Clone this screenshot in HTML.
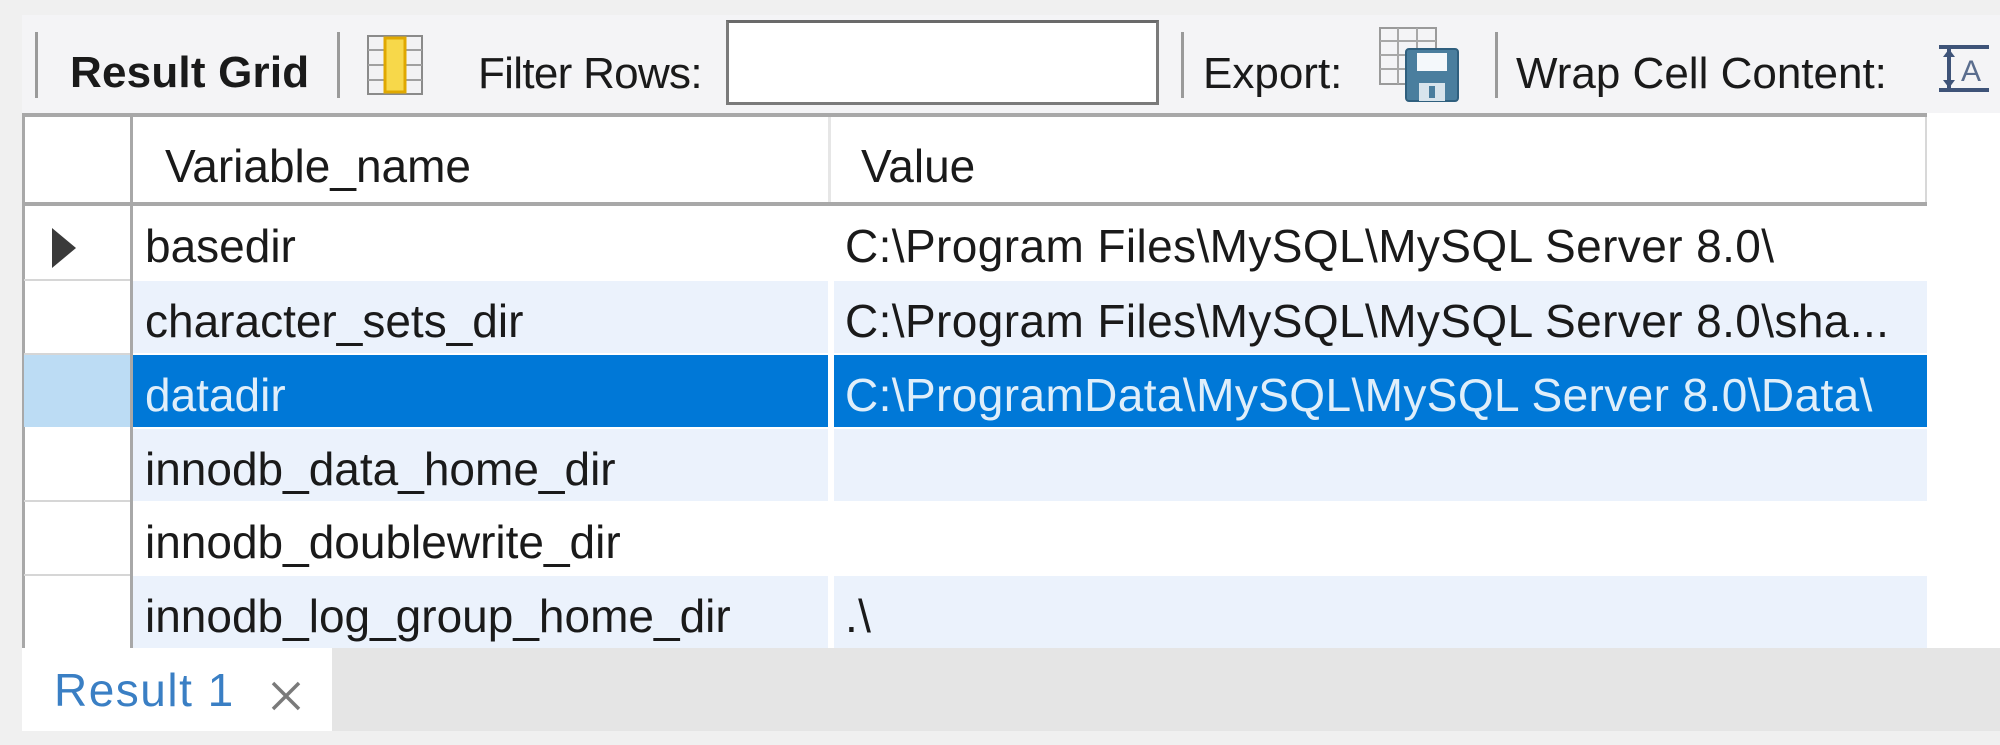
<!DOCTYPE html>
<html><head><meta charset="utf-8"><style>
*{margin:0;padding:0;box-sizing:border-box}
body{width:2000px;height:745px;background:#f0f0f0;position:relative;overflow:hidden;font-family:"Liberation Sans",Tahoma,sans-serif;color:#1a1a1a}
.a{position:absolute}
.t{position:absolute;font-size:46px;white-space:nowrap;line-height:1}
.v{letter-spacing:0.4px}
.sep{position:absolute;width:3px;background:#9a9a9a;top:32px;height:66px}
.row{position:absolute;left:133px;width:1794px;height:72px}
.c1{position:absolute;left:0;top:0;width:695px;height:72px}
.c2{position:absolute;left:701px;top:0;width:1093px;height:72px}
</style></head><body>
<div class="a" style="left:22px;top:15px;width:1978px;height:98px;background:#f4f4f6"></div>
<div class="sep" style="left:35px"></div>
<div class="t" style="left:70px;top:51px;font-weight:bold;font-size:44px;letter-spacing:0.2px">Result Grid</div>
<div class="sep" style="left:337px"></div>
<svg class="a" style="left:367px;top:35px" width="56" height="60" viewBox="0 0 56 60">
<rect x="1" y="1" width="54" height="58" fill="#f2f2f4" stroke="#8a8a8a" stroke-width="2"/>
<g stroke="#a0a0a0" stroke-width="2"><line x1="1" y1="15" x2="55" y2="15"/><line x1="1" y1="30" x2="55" y2="30"/><line x1="1" y1="45" x2="55" y2="45"/></g>
<rect x="18" y="3" width="20" height="54" fill="#f7d84a" stroke="#e0a800" stroke-width="3"/>
</svg>
<div class="t" style="left:478px;top:52px;font-size:44px;letter-spacing:-0.7px">Filter Rows:</div>
<div class="a" style="left:726px;top:20px;width:433px;height:85px;background:#fff;border:3px solid #7a7a7a;border-top-color:#6a6a6a"></div>
<div class="sep" style="left:1181px"></div>
<div class="t" style="left:1203px;top:52px;font-size:44px;letter-spacing:0px">Export:</div>
<svg class="a" style="left:1379px;top:27px" width="82" height="76" viewBox="0 0 82 76">
<rect x="1" y="1" width="56" height="56" fill="#f4f4f6" stroke="#9a9a9a" stroke-width="2"/>
<g stroke="#a8a8a8" stroke-width="2"><line x1="1" y1="14" x2="57" y2="14"/><line x1="1" y1="28" x2="57" y2="28"/><line x1="1" y1="42" x2="57" y2="42"/><line x1="19" y1="1" x2="19" y2="57"/><line x1="38" y1="1" x2="38" y2="57"/></g>
<rect x="27" y="22" width="52" height="52" rx="3" fill="#4a7e9e" stroke="#2f5f7e" stroke-width="2"/>
<rect x="38" y="26" width="30" height="18" fill="#f4f8fb"/>
<rect x="40" y="56" width="26" height="18" fill="#d8e4ec"/>
<rect x="50" y="59" width="6" height="12" fill="#4a7e9e"/>
</svg>
<div class="sep" style="left:1495px"></div>
<div class="t" style="left:1516px;top:52px;font-size:44px;letter-spacing:0px">Wrap Cell Content:</div>
<svg class="a" style="left:1939px;top:45px" width="52" height="48" viewBox="0 0 52 48">
<g fill="#3e5378"><rect x="0" y="0" width="50" height="4"/><rect x="0" y="43" width="50" height="4"/><rect x="8" y="4" width="4" height="39"/><polygon points="4,12 16,12 10,4"/><polygon points="4,35 16,35 10,43"/></g>
<text x="22" y="36" font-family="Liberation Sans,sans-serif" font-size="30" fill="#5a6d8e">A</text>
</svg>
<!-- table -->
<div class="a" style="left:22px;top:113px;width:1978px;height:535px;background:#fff"></div>
<div class="a" style="left:22px;top:113px;width:1905px;height:4px;background:#a8a8a8"></div>
<div class="a" style="left:22px;top:113px;width:3px;height:535px;background:#a8a8a8"></div>
<div class="a" style="left:130px;top:113px;width:3px;height:535px;background:#a8a8a8"></div>
<div class="a" style="left:1925px;top:117px;width:2px;height:88px;background:#d8d8d8"></div>
<div class="a" style="left:828px;top:117px;width:3px;height:87px;background:#e6e6e6"></div>
<div class="a" style="left:22px;top:202px;width:1905px;height:4px;background:#a8a8a8"></div>
<div class="t" style="left:165px;top:143px">Variable_name</div>
<div class="t" style="left:861px;top:143px">Value</div>
<div class="a" style="left:24px;top:279px;width:106px;height:2px;background:#d6d6d6"></div>
<div class="a" style="left:24px;top:353px;width:106px;height:2px;background:#d6d6d6"></div>
<div class="a" style="left:24px;top:355px;width:106px;height:72px;background:#bcdcf4"></div>
<div class="a" style="left:24px;top:500px;width:106px;height:2px;background:#d6d6d6"></div>
<div class="a" style="left:24px;top:574px;width:106px;height:2px;background:#d6d6d6"></div>
<svg class="a" style="left:52px;top:228px" width="24" height="40"><polygon points="0,0 24,20 0,40" fill="#3a3a3a"/></svg>

<div class="row" style="top:206px"><div class="c1"></div><div class="c2"></div></div>
<div class="t" style="left:145px;top:223px">basedir</div>
<div class="t v" style="left:845px;top:223px">C:\Program Files\MySQL\MySQL Server 8.0\</div>

<div class="row" style="top:281px"><div class="c1" style="background:#ebf2fc"></div><div class="c2" style="background:#ebf2fc"></div></div>
<div class="t" style="left:145px;top:298px">character_sets_dir</div>
<div class="t v" style="left:845px;top:298px">C:\Program Files\MySQL\MySQL Server 8.0\sha...</div>

<div class="row" style="top:355px"><div class="c1" style="background:#0078d7"></div><div class="c2" style="background:#0078d7"></div></div>
<div class="t" style="left:145px;top:372px;color:#dfeefa">datadir</div>
<div class="t v" style="left:845px;top:372px;color:#dfeefa">C:\ProgramData\MySQL\MySQL Server 8.0\Data\</div>

<div class="row" style="top:429px"><div class="c1" style="background:#ebf2fc"></div><div class="c2" style="background:#ebf2fc"></div></div>
<div class="t" style="left:145px;top:446px">innodb_data_home_dir</div>

<div class="row" style="top:502px"><div class="c1"></div><div class="c2"></div></div>
<div class="t" style="left:145px;top:519px">innodb_doublewrite_dir</div>

<div class="row" style="top:576px"><div class="c1" style="background:#ebf2fc"></div><div class="c2" style="background:#ebf2fc"></div></div>
<div class="t" style="left:145px;top:593px">innodb_log_group_home_dir</div>
<div class="t v" style="left:845px;top:593px">.\</div>

<div class="a" style="left:22px;top:648px;width:1978px;height:83px;background:#e5e5e5"></div>
<div class="a" style="left:22px;top:648px;width:310px;height:83px;background:#fff"></div>
<div class="t" style="left:54px;top:667px;color:#3a7fc4;font-size:46px;letter-spacing:1.5px">Result 1</div>
<svg class="a" style="left:270px;top:681px" width="32" height="30"><path d="M3 2 L29 28 M29 2 L3 28" stroke="#7a7a7a" stroke-width="3.5"/></svg>
</body></html>
